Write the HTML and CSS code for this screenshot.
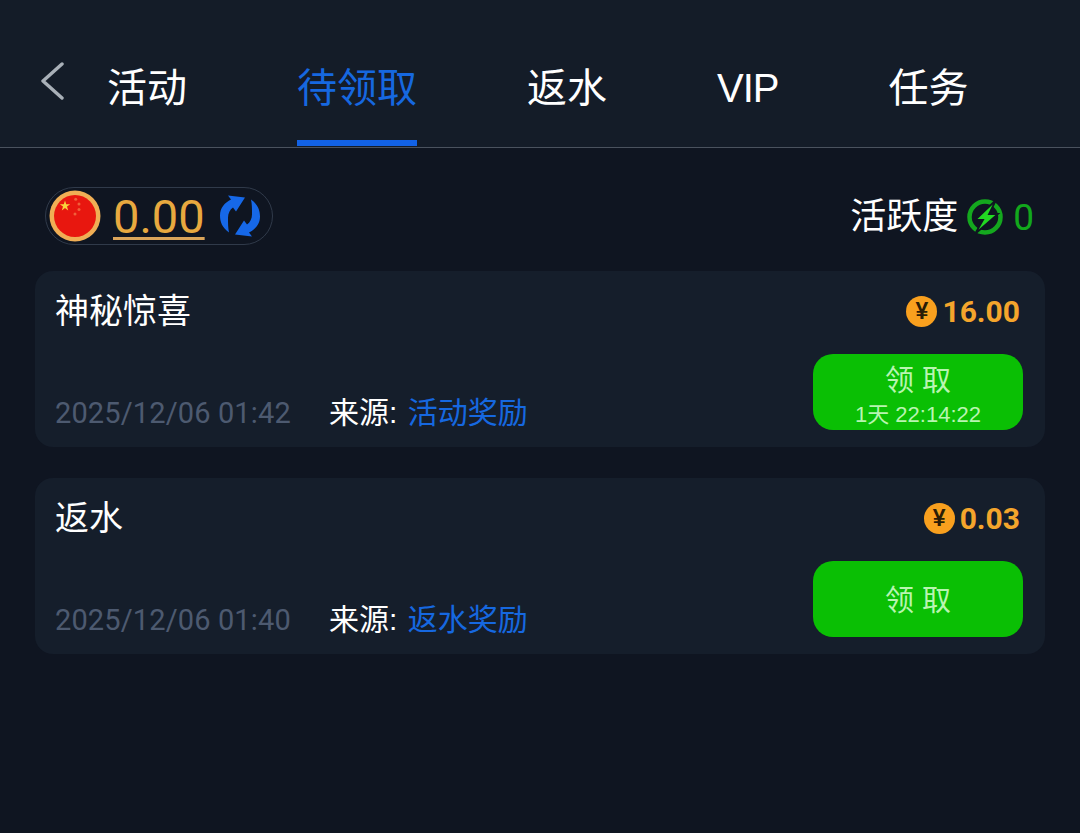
FILE: index.html
```html
<!DOCTYPE html>
<html lang="zh">
<head>
<meta charset="utf-8">
<title>待领取</title>
<link rel="stylesheet" href="styles.css">
</head>
<body>
<header class="topbar">
  <svg class="back" width="24" height="38" viewBox="0 0 24 38"><path d="M22 2 3 19l19 17" fill="none" stroke="#a9b0b8" stroke-width="3.4" stroke-linecap="round" stroke-linejoin="round"/></svg>
  <nav class="tabs">
    <a class="tab">活动</a>
    <a class="tab active">待领取</a>
    <a class="tab">返水</a>
    <a class="tab tab-latin">VIP</a>
    <a class="tab">任务</a>
  </nav>
</header>
<main class="content">
  <section class="summary">
    <div class="balance">
      <svg class="flag" width="52" height="52" viewBox="0 0 52 52">
        <circle cx="26" cy="26" r="25.5" fill="#f0ae55"/>
        <circle cx="26" cy="26" r="21" fill="#e8170f"/>
        <path d="M16 10.500 17.200 14.300 21.200 14.300 18 16.600 19.200 20.400 16 18.100 12.800 20.400 14 16.600 10.800 14.300 14.800 14.300z" fill="#f9d33c"/>
        <circle cx="26.700" cy="9.300" r="1.500" fill="#f0603a"/>
        <circle cx="30" cy="14" r="1.500" fill="#f0603a"/>
        <circle cx="30" cy="19.500" r="1.500" fill="#f0603a"/>
        <circle cx="26" cy="24" r="1.500" fill="#f0603a"/>
      </svg>
      <span class="amount">0.00</span>
      <svg class="refresh" width="40" height="44" viewBox="0 0 40 43">
        <path d="M9 38C2 33 0 27 0 21 0 13 5 8 11 5L8 1 25 3 16 17 13 13C10 15 8 19 8 23 8 29 8 33 9 38z" fill="#1668e8"/>
        <path d="M9 38C2 33 0 27 0 21 0 13 5 8 11 5L8 1 25 3 16 17 13 13C10 15 8 19 8 23 8 29 8 33 9 38z" fill="#1668e8" transform="rotate(180 20 21.500)"/>
      </svg>
    </div>
    <div class="activity">
      <span class="activity-label">活跃度</span>
      <svg class="bolt" width="38" height="36" viewBox="0 0 38 36">
        <circle cx="19" cy="18" r="15.500" fill="none" stroke="#14a81e" stroke-width="4.500"/>
        <path d="M30 1 9 21h8L9 35 32 15h-9z" fill="#22d822" stroke="#0f1521" stroke-width="1.800"/>
      </svg>
      <span class="activity-value">0</span>
    </div>
  </section>

  <article class="card">
    <div class="card-top">
      <h2 class="card-title">神秘惊喜</h2>
      <div class="reward"><span class="coin">¥</span><span class="reward-value">16.00</span></div>
    </div>
    <div class="card-bottom">
      <time class="date">2025/12/06 01:42</time>
      <div class="source">来源: <span class="source-name">活动奖励</span></div>
      <button class="claim"><span class="claim-label">领 取</span><span class="claim-timer">1天 22:14:22</span></button>
    </div>
  </article>

  <article class="card">
    <div class="card-top">
      <h2 class="card-title">返水</h2>
      <div class="reward"><span class="coin">¥</span><span class="reward-value">0.03</span></div>
    </div>
    <div class="card-bottom">
      <time class="date">2025/12/06 01:40</time>
      <div class="source">来源: <span class="source-name">返水奖励</span></div>
      <button class="claim"><span class="claim-label">领 取</span></button>
    </div>
  </article>
</main>
</body>
</html>
```

FILE: styles.css
```css
* { box-sizing: border-box; }
html, body { margin: 0; height: 100%; }
body {
  background: #0f1521;
  color: #fff;
  font-family: "Liberation Sans", "Noto Sans CJK SC", sans-serif;
  overflow: hidden;
}
.topbar {
  height: 148px;
  background: #141c28;
  border-bottom: 1px solid #4a525e;
  display: flex;
  padding: 62px 0 0 40px;
  gap: 43px;
}
.back { flex: none; }
.tabs { display: flex; gap: 110px; height: 85px; }
.tab {
  position: relative;
  font-size: 40px;
  line-height: 52px;
  color: #fff;
  white-space: nowrap;
}
.tab-latin { letter-spacing: -1px; }
.tab.active { color: #1668e0; }
.tab.active::after {
  content: "";
  position: absolute;
  left: 0;
  right: 0;
  top: 78px;
  height: 6px;
  background: #1262e6;
}
.content { padding: 39px 35px 0; }
.summary {
  display: flex;
  justify-content: space-between;
  align-items: center;
  padding: 0 11px 0 10px;
  height: 58px;
}
.balance {
  width: 228px;
  height: 58px;
  border: 1px solid #303a4a;
  border-radius: 29px;
  display: flex;
  align-items: center;
  padding-left: 3px;
}
.flag { flex: none; }
.amount {
  margin: 2px 0 0 12px;
  font-family: "Roboto", sans-serif;
  font-size: 47px;
  line-height: 50px;
  color: #e8a93f;
  text-decoration: underline;
  text-decoration-thickness: 3px;
  text-underline-offset: 4px;
  text-decoration-color: #dba55a;
}
.refresh { margin-left: 15px; flex: none; }
.activity { display: flex; align-items: center; padding-top: 2px; }
.activity-label { font-size: 36px; line-height: 44px; }
.bolt { margin-left: 8px; }
.activity-value {
  margin-left: 9px;
  font-family: "Roboto", sans-serif;
  font-size: 37px;
  color: #12a81c;
}
.card {
  background: #151e2b;
  border-radius: 18px;
  height: 176px;
  margin-top: 26px;
  padding: 20px 22px 0 20px;
}
.card + .card { margin-top: 31px; }
.card-top {
  display: flex;
  justify-content: space-between;
  align-items: center;
  height: 40px;
}
.card-title { margin: 0; font-size: 34px; font-weight: 400; line-height: 40px; }
.reward { display: flex; align-items: center; gap: 5px; padding-right: 3px; }
.coin {
  width: 31px;
  height: 31px;
  border-radius: 50%;
  background: #f9a01e;
  color: #2a1c06;
  font-size: 23px;
  font-weight: 700;
  line-height: 31px;
  text-align: center;
}
.reward-value {
  font-family: "Roboto", sans-serif;
  font-size: 30px;
  font-weight: 700;
  color: #f4a52c;
}
.card-bottom {
  display: flex;
  align-items: flex-end;
  margin-top: 23px;
}
.date {
  width: 274px;
  font-family: "Roboto", sans-serif;
  font-size: 29px;
  letter-spacing: 0.13px;
  line-height: 34px;
  color: #4d5a70;
  padding-bottom: 17px;
}
.source { font-size: 30px; line-height: 34px; padding-bottom: 17px; flex: 1; }
.source-name { color: #1668e0; margin-left: 2px; }
.claim {
  width: 210px;
  height: 76px;
  margin-bottom: 17px;
  border: 0;
  border-radius: 20px;
  background: #0abf04;
  color: #b8f5b0;
  font-family: inherit;
  display: flex;
  flex-direction: column;
  align-items: center;
  justify-content: center;
  padding: 4px 0 0;
}
.claim-label { font-size: 29px; line-height: 36px; }
.claim-timer { font-size: 22px; line-height: 26px; margin-top: 3px; margin-bottom: -3px; }
```
